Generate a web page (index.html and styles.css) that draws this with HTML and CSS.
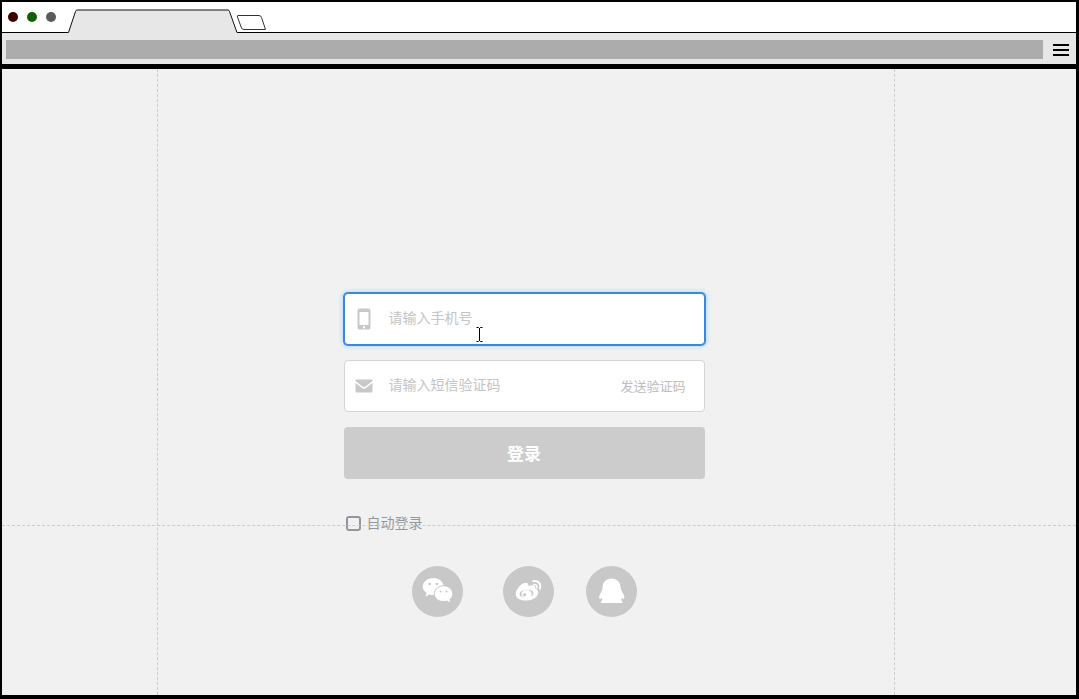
FILE: index.html
```
<!DOCTYPE html>
<html lang="zh-CN">

<head>
    <meta charset="UTF-8">
    <meta name="viewport" content="width=device-width, initial-scale=1.0">
    <title>登录</title>
    <link rel="stylesheet" href="styles.css">
</head>

<body>
    <div class="browser">
        <div class="tabs">
            <span class="dot red"></span>
            <span class="dot green"></span>
            <span class="dot gray"></span>
            <svg class="tab" width="172" height="25" viewBox="0 0 172 25">
                <path d="M1 25V23.5L8 3Q8.500 1 10 1H161Q162 1 162.500 2.500L170 23.500V25Z" fill="#e7e7e7" />
                <path d="M0 23.500H1.500L8.500 2.500Q9 1 10 1H161Q162 1 162.500 2.500L170 23.500H172" fill="none" stroke="#111" />
            </svg>
            <svg class="new_tab" width="32" height="18" viewBox="0 0 32 18">
                <path d="M3 1.500H24Q26 1.500 26.500 3.500L30.500 15.500H9Q7 15.500 6.500 14L2.500 3Q2 1.500 3 1.500Z" fill="#fff" stroke="#333" />
            </svg>
        </div>
        <div class="toolbar">
            <div class="address"></div>
            <button class="menu" type="button" aria-label="菜单">
                <span></span><span></span><span></span>
            </button>
        </div>
        <main class="page">
            <div class="col">
                <form class="login">
                    <div class="field current">
                        <label for="phone" aria-label="手机号">
                            <svg width="18" height="22" viewBox="0 0 18 22">
                                <path fill="#c8c8c8" fill-rule="evenodd" d="M4.500 0.500H13.500Q15.500 0.500 15.500 2.500V19.500Q15.500 21.500 13.500 21.500H4.500Q2.500 21.500 2.500 19.500V2.500Q2.500 0.500 4.500 0.500ZM4.500 4V17H13.500V4ZM9 18A1.200 1.200 0 1 0 9 20.400A1.200 1.200 0 1 0 9 18Z" />
                            </svg>
                        </label>
                        <input type="tel" id="phone" placeholder="请输入手机号">
                    </div>
                    <div class="field">
                        <label for="code" aria-label="短信验证码">
                            <svg width="18" height="14" viewBox="0 0 18 14">
                                <path fill="#c8c8c8" d="M1.500 0.500H16.500Q18 0.500 17.500 2L10.500 7.500Q9 8.600 7.500 7.500L0.500 2Q0 0.500 1.500 0.500ZM0.500 4L7 9Q9 10.500 11 9L17.500 4V12Q17.500 13.500 16 13.500H2Q0.500 13.500 0.500 12Z" />
                            </svg>
                        </label>
                        <input type="text" id="code" placeholder="请输入短信验证码">
                        <button class="send" type="button">发送验证码</button>
                    </div>
                    <button class="submit" type="submit">登录</button>
                    <label class="auto">
                        <input type="checkbox"><span>自动登录</span>
                    </label>
                    <div class="social">
                        <a href="#" class="wechat" aria-label="微信">
                            <svg width="51" height="51" viewBox="0 0 51 51">
                                <path fill="#fff" d="M21.500 12C15.500 12 10.800 15.700 10.800 20.500C10.800 23.300 12.300 25.600 14.700 27.100L13.400 30.700L17.500 28.500Q19.500 29.200 22 29.100A9.500 8.500 0 0 1 31.500 19.200C30.500 15 26.500 12 21.500 12Z" />
                                <path fill="#fff" d="M31.500 20.300C26.500 20.300 22.700 23.500 22.700 27.700C22.700 32 26.500 35.100 31.500 35.100Q33.300 35.100 35 34.600L38.300 36.500L37.400 33.500Q40.400 31.200 40.400 27.700C40.400 23.500 36.500 20.300 31.500 20.300Z" />
                                <g fill="#c8c8c8">
                                    <circle cx="17.700" cy="18" r="1.300" />
                                    <circle cx="24.900" cy="18" r="1.300" />
                                    <circle cx="28.600" cy="25.500" r="1" />
                                    <circle cx="34.500" cy="25.500" r="1" />
                                </g>
                            </svg>
                        </a>
                        <a href="#" class="weibo" aria-label="微博">
                            <svg width="51" height="51" viewBox="0 0 51 51">
                                <path fill="#fff" fill-rule="evenodd" d="M20.500 17.300C24 15.800 26 17.300 25.300 20C29 18.500 33.500 18.700 32.200 22.800C35 23.500 36 26 34.800 28.700C33 32.500 28 34.500 22.500 34.500C16.500 34.500 12.700 32 12.700 28C12.700 24 17 18.800 20.500 17.300ZM23 23.700C19 24 16.300 26 16.600 28.300C16.900 30.700 20 32 24 31.500C28 31 30.700 29 30.400 26.700C30.100 24.500 27 23.400 23 23.700Z" />
                                <path fill="#fff" fill-rule="evenodd" d="M23.500 24.200A4.200 3.800 0 1 0 23.600 31.600A4.200 3.800 0 1 0 23.500 24.200ZM21.800 27.200A1.700 1.500 0 1 1 21.700 30.200A1.700 1.500 0 1 1 21.800 27.200Z" />
                                <g fill="none" stroke="#fff" stroke-linecap="round">
                                    <path stroke-width="2" d="M30.200 15.300C35 14 38.500 18 36.800 22.600" />
                                    <path stroke-width="1.500" d="M30.800 18.700C33 18.200 34.500 19.800 33.800 21.900" />
                                </g>
                            </svg>
                        </a>
                        <a href="#" class="qq" aria-label="QQ">
                            <svg width="51" height="51" viewBox="0 0 51 51">
                                <path fill="#fff" d="M25.500 12.500C20 12.500 16.700 16 16.600 21.500Q16.700 23 15.700 24.500Q15.400 26 14 28Q12.500 31 13.500 33Q14.500 33 15.500 32Q16 33 16.500 33.700Q15 34.500 14.800 37H36.500Q36.300 34.500 35 33.700Q35.500 33 36 32Q37 33 38 33Q39 31 37.500 28Q36 26 35.500 24.500Q34.500 23 34.600 21.500C34.500 16 31 12.500 25.500 12.500Z" />
                            </svg>
                        </a>
                    </div>
                </form>
            </div>
            <div class="line"></div>
            <svg class="cursor" width="7" height="15" viewBox="0 0 7 15">
                <path fill="none" stroke="#000" d="M0.500 0.500H2.500L3.500 1.500L4.500 0.500H6.500M3.500 1V14M0.500 14.500H2.500L3.500 13.500L4.500 14.500H6.500" />
            </svg>
        </main>
    </div>
</body>

</html>
```
FILE: styles.css
```
* {
    margin: 0;
    padding: 0;
    box-sizing: border-box;
}

body {
    font-family: "Liberation Sans", "Noto Sans CJK SC", sans-serif;
    font-size: 14px;
}

button,
input {
    font-family: inherit;
    font-size: 14px;
    border: 0;
    outline: none;
    background: none;
}

.browser {
    display: flex;
    flex-direction: column;
    min-height: 100vh;
    border: solid #000;
    border-width: 2px 3px 4px 2px;
    background-color: #f1f1f1;
}

.tabs {
    display: flex;
    align-items: center;
    height: 31px;
    padding-left: 6px;
    background-color: #fff;
    border-bottom: 1px solid #000;
}

.dot {
    width: 10px;
    height: 10px;
    margin-right: 9px;
    border-radius: 50%;
}

.red {
    background-color: #3c0000;
}

.green {
    background-color: #125f08;
}

.gray {
    background-color: #5b5b5b;
}

.tab {
    align-self: flex-end;
    margin-bottom: -2px;
    margin-left: 2px;
}

.new_tab {
    align-self: flex-end;
    margin-left: -4px;
}

.toolbar {
    display: flex;
    align-items: center;
    height: 36px;
    padding: 2px 7px 0 4px;
    background-color: #e7e7e7;
    border-bottom: 5px solid #000;
}

.address {
    flex: 1;
    height: 19px;
    margin-right: 10px;
    background-color: #acacac;
}

.menu {
    display: flex;
    flex-direction: column;
    gap: 3px;
    width: 16px;
}

.menu span {
    height: 2px;
    background-color: #000;
}

.page {
    position: relative;
    flex: 1;
    display: grid;
    grid-template-columns: 155fr 738fr 181fr;
}

/* 中间一列，左右是虚线 */
.col {
    grid-column: 2;
    padding: 224px 4px 60px 0;
    border: dashed #ccc;
    border-width: 0 1px;
}

.login {
    display: flex;
    flex-direction: column;
    gap: 15px;
    width: 100%;
    max-width: 361px;
    margin: 0 auto;
}

.field {
    display: flex;
    align-items: center;
    height: 52px;
    padding: 0 18px 0 10px;
    background-color: #fff;
    border: 1px solid #d4d4d4;
    border-radius: 4px;
}

.field.current {
    border-color: #3f86d8;
    box-shadow: 0 0 0 1px #3f86d8, 0 0 4px 2px #b5dcff;
}

.field label {
    display: flex;
    margin-right: 16px;
}

.field input {
    flex: 1;
    min-width: 0;
    height: 100%;
    padding-bottom: 2px;
}

.field input::placeholder {
    color: #c4c4c4;
}

.send {
    padding-bottom: 2px;
    font-size: 13px;
    color: #bdbdbd;
}

.submit {
    height: 52px;
    padding-bottom: 2px;
    font-size: 17px;
    font-weight: bold;
    color: #fff;
    background-color: #ccc;
    border-radius: 4px;
}

.auto {
    display: flex;
    align-items: center;
    align-self: flex-start;
    gap: 6px;
    margin: 19px 0 18px 2px;
    line-height: 20px;
    color: #92979f;
}

.auto input {
    appearance: none;
    width: 15px;
    height: 15px;
    border: 2px solid #92979f;
    border-radius: 3px;
}

.auto input:checked {
    background-color: #92979f;
}

.social {
    display: flex;
    justify-content: center;
}

.social a {
    width: 51px;
    height: 51px;
    border-radius: 50%;
    background-color: #c8c8c8;
}

.social .weibo {
    margin: 0 32px 0 40px;
}

.line {
    position: absolute;
    top: 456px;
    left: 0;
    right: 0;
    border-top: 1px dashed #ccc;
}

.cursor {
    position: absolute;
    top: 258px;
    left: 474px;
}
```
